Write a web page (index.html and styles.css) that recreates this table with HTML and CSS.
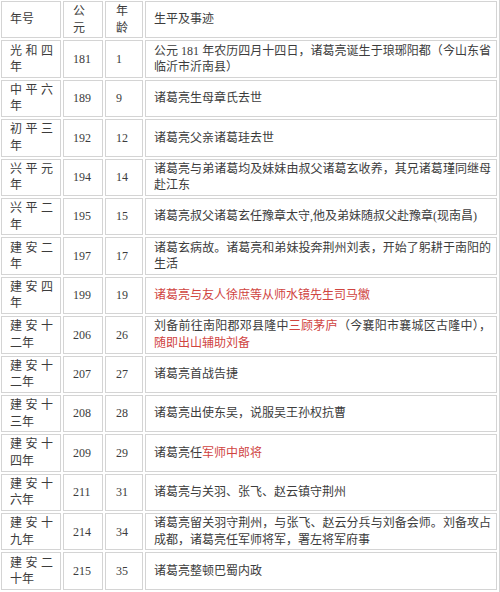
FILE: index.html
```html
<!DOCTYPE html>
<html lang="zh-CN">
<head>
<meta charset="utf-8">
<title>诸葛亮生平</title>
<link rel="stylesheet" href="styles.css">
</head>
<body>
<table class="timeline">
  <tr>
    <td class="era">年号</td>
    <td class="num">公元</td>
    <td class="age">年龄</td>
    <td class="event">生平及事迹</td>
  </tr>
  <tr>
    <td class="era">光和四年</td>
    <td class="num">181</td>
    <td class="age">1</td>
    <td class="event"><span class="fill">公元 181 年农历四月十四日，诸葛亮诞生于琅琊阳都（今山东省</span>临沂市沂南县）</td>
  </tr>
  <tr>
    <td class="era">中平六年</td>
    <td class="num">189</td>
    <td class="age">9</td>
    <td class="event">诸葛亮生母章氏去世</td>
  </tr>
  <tr>
    <td class="era">初平三年</td>
    <td class="num">192</td>
    <td class="age">12</td>
    <td class="event">诸葛亮父亲诸葛珪去世</td>
  </tr>
  <tr>
    <td class="era">兴平元年</td>
    <td class="num">194</td>
    <td class="age">14</td>
    <td class="event"><span class="fill">诸葛亮与弟诸葛均及妹妹由叔父诸葛玄收养，其兄诸葛瑾同继母</span>赴江东</td>
  </tr>
  <tr>
    <td class="era">兴平二年</td>
    <td class="num">195</td>
    <td class="age">15</td>
    <td class="event">诸葛亮叔父诸葛玄任豫章太守,他及弟妹随叔父赴豫章(现南昌)</td>
  </tr>
  <tr>
    <td class="era">建安二年</td>
    <td class="num">197</td>
    <td class="age">17</td>
    <td class="event"><span class="fill">诸葛玄病故。诸葛亮和弟妹投奔荆州刘表，开始了躬耕于南阳的</span>生活</td>
  </tr>
  <tr>
    <td class="era">建安四年</td>
    <td class="num">199</td>
    <td class="age">19</td>
    <td class="event"><span class="hl">诸葛亮与友人徐庶等从师水镜先生司马徽</span></td>
  </tr>
  <tr>
    <td class="era">建安十二年</td>
    <td class="num">206</td>
    <td class="age">26</td>
    <td class="event"><span class="fill">刘备前往南阳郡邓县隆中<span class="hl">三顾茅庐</span>（今襄阳市襄城区古隆中），</span><span class="hl">随即出山辅助刘备</span></td>
  </tr>
  <tr>
    <td class="era">建安十二年</td>
    <td class="num">207</td>
    <td class="age">27</td>
    <td class="event">诸葛亮首战告捷</td>
  </tr>
  <tr>
    <td class="era">建安十三年</td>
    <td class="num">208</td>
    <td class="age">28</td>
    <td class="event">诸葛亮出使东吴，说服吴王孙权抗曹</td>
  </tr>
  <tr>
    <td class="era">建安十四年</td>
    <td class="num">209</td>
    <td class="age">29</td>
    <td class="event">诸葛亮任<span class="hl">军师中郎将</span></td>
  </tr>
  <tr>
    <td class="era">建安十六年</td>
    <td class="num">211</td>
    <td class="age">31</td>
    <td class="event">诸葛亮与关羽、张飞、赵云镇守荆州</td>
  </tr>
  <tr>
    <td class="era">建安十九年</td>
    <td class="num">214</td>
    <td class="age">34</td>
    <td class="event"><span class="fill">诸葛亮留关羽守荆州，与张飞、赵云分兵与刘备会师。刘备攻占</span>成都，诸葛亮任军师将军，署左将军府事</td>
  </tr>
  <tr>
    <td class="era">建安二十年</td>
    <td class="num">215</td>
    <td class="age">35</td>
    <td class="event">诸葛亮整顿巴蜀内政</td>
  </tr>
</table>
</body>
</html>
```

FILE: styles.css
```css
html, body {
  margin: 0;
  padding: 0;
  background: #ffffff;
}

body {
  font-family: "Liberation Serif", "Noto Sans CJK SC", serif;
  font-size: 12px;
  line-height: 16.5px;
  color: #3c3c3c;
  overflow: hidden;
}

.timeline {
  margin: -2px 0 0 -2px;
  width: 502px;
  table-layout: fixed;
  border-collapse: separate;
  border-spacing: 2px;
  border: 1px solid #d4d4d4;
}

.timeline tr {
  height: 37.4px;
}

.timeline td {
  box-sizing: border-box;
  border: 1px solid #d4d4d4;
  vertical-align: middle;
  padding: 0;
  word-break: break-all;
}

.era {
  width: 60px;
  padding-left: 8px !important;
  padding-right: 7px !important;
  text-align: justify;
}

.num {
  width: 40px;
  padding-left: 9px !important;
  padding-right: 9px !important;
}

.age {
  width: 38px;
  padding-left: 10px !important;
  padding-right: 6px !important;
}

.event {
  width: 352px;
  padding-left: 8px !important;
  padding-right: 5px !important;
}

.fill {
  display: block;
  text-align: justify;
  text-align-last: justify;
}

.hl {
  color: #d0443f;
}
```
